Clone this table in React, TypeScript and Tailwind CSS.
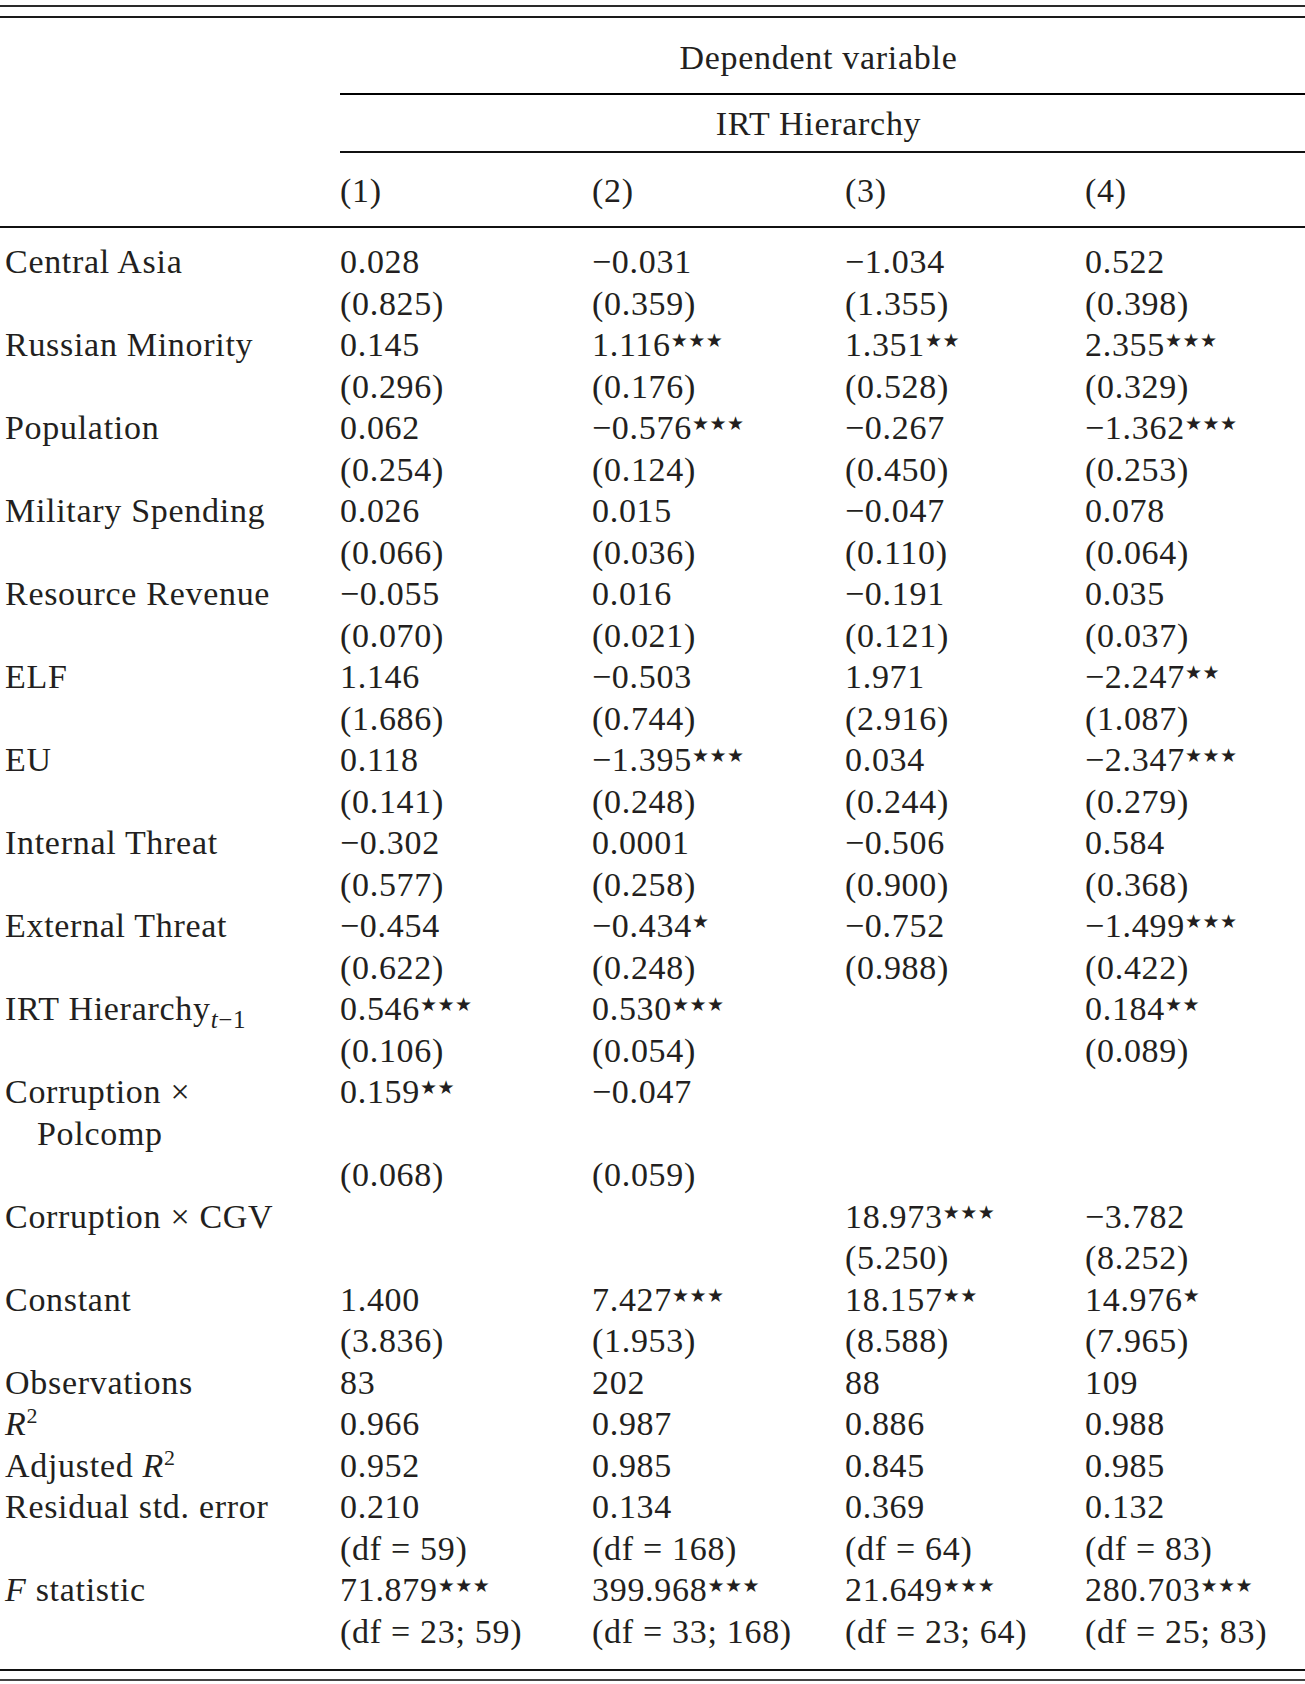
import React from "react";

type Cell = React.ReactNode;

const serif = { fontFamily: '"Liberation Serif", "Times New Roman", serif' };

function Val({ v }: { v: string }) {
  if (!v) return null;
  const m = v.match(/^(.*?)(\*+)$/);
  if (!m) return <>{v}</>;
  return (
    <>
      {m[1]}
      <span
        className="relative bottom-[9px] text-[19px] tracking-[0.5px]"
        style={{ fontFamily: '"DejaVu Sans", sans-serif' }}
      >
        {"★".repeat(m[2].length)}
      </span>
    </>
  );
}

const Rsq = () => (
  <>
    <span className="italic">R</span>
    <span className="relative bottom-[12px] text-[22px]">2</span>
  </>
);

const rows: [Cell, string, string, string, string][] = [
  ["Central Asia", "0.028", "−0.031", "−1.034", "0.522"],
  ["", "(0.825)", "(0.359)", "(1.355)", "(0.398)"],
  ["Russian Minority", "0.145", "1.116***", "1.351**", "2.355***"],
  ["", "(0.296)", "(0.176)", "(0.528)", "(0.329)"],
  ["Population", "0.062", "−0.576***", "−0.267", "−1.362***"],
  ["", "(0.254)", "(0.124)", "(0.450)", "(0.253)"],
  ["Military Spending", "0.026", "0.015", "−0.047", "0.078"],
  ["", "(0.066)", "(0.036)", "(0.110)", "(0.064)"],
  ["Resource Revenue", "−0.055", "0.016", "−0.191", "0.035"],
  ["", "(0.070)", "(0.021)", "(0.121)", "(0.037)"],
  ["ELF", "1.146", "−0.503", "1.971", "−2.247**"],
  ["", "(1.686)", "(0.744)", "(2.916)", "(1.087)"],
  ["EU", "0.118", "−1.395***", "0.034", "−2.347***"],
  ["", "(0.141)", "(0.248)", "(0.244)", "(0.279)"],
  ["Internal Threat", "−0.302", "0.0001", "−0.506", "0.584"],
  ["", "(0.577)", "(0.258)", "(0.900)", "(0.368)"],
  ["External Threat", "−0.454", "−0.434*", "−0.752", "−1.499***"],
  ["", "(0.622)", "(0.248)", "(0.988)", "(0.422)"],
  [
    <>
      IRT Hierarchy
      <span className="relative top-[8px] text-[25px]">
        <span className="italic">t</span>−1
      </span>
    </>,
    "0.546***",
    "0.530***",
    "",
    "0.184**",
  ],
  ["", "(0.106)", "(0.054)", "", "(0.089)"],
  ["Corruption ×", "0.159**", "−0.047", "", ""],
  [<span className="pl-[32px]">Polcomp</span>, "", "", "", ""],
  ["", "(0.068)", "(0.059)", "", ""],
  ["Corruption × CGV", "", "", "18.973***", "−3.782"],
  ["", "", "", "(5.250)", "(8.252)"],
  ["Constant", "1.400", "7.427***", "18.157**", "14.976*"],
  ["", "(3.836)", "(1.953)", "(8.588)", "(7.965)"],
  ["Observations", "83", "202", "88", "109"],
  [<Rsq />, "0.966", "0.987", "0.886", "0.988"],
  [<>Adjusted <Rsq /></>, "0.952", "0.985", "0.845", "0.985"],
  ["Residual std. error", "0.210", "0.134", "0.369", "0.132"],
  ["", "(df = 59)", "(df = 168)", "(df = 64)", "(df = 83)"],
  [<><span className="italic">F</span> statistic</>, "71.879***", "399.968***", "21.649***", "280.703***"],
  ["", "(df = 23; 59)", "(df = 33; 168)", "(df = 23; 64)", "(df = 25; 83)"],
];

const grid = "grid grid-cols-[340px_252px_253px_240px_1fr]";

export default function App() {
  return (
    <div
      className="w-[1305px] h-[1684px] bg-white text-[#231f20] text-[34px] tracking-[0.7px] leading-[41.5px] overflow-hidden"
      style={serif}
    >
      <div className="mt-[5px] h-[2px] bg-[#2a2a2a]" />
      <div className="mt-[9px] h-[2px] bg-[#1a1a1a]" />

      <div className={grid}>
        <div />
        <div className="col-span-4 pt-[19px] pb-[14.5px] text-center pr-[8px]">Dependent variable</div>
      </div>
      <div className={grid}>
        <div />
        <div className="col-span-4 h-[2px] bg-black" />
      </div>
      <div className={grid}>
        <div />
        <div className="col-span-4 pt-[8px] pb-[6.5px] text-center pr-[8px]">IRT Hierarchy</div>
      </div>
      <div className={grid}>
        <div />
        <div className="col-span-4 h-[2px] bg-[#111]" />
      </div>
      <div className={`${grid} pt-[17px] pb-[14.5px]`}>
        <div />
        <div>(1)</div>
        <div>(2)</div>
        <div>(3)</div>
        <div>(4)</div>
      </div>
      <div className="h-[1.5px] bg-[#111]" />

      <div className="pt-[13.5px]">
        {rows.map((r, i) => (
          <div key={i} className={`${grid} h-[41.5px] whitespace-nowrap`}>
            <div className="pl-[5px]">{r[0]}</div>
            <div><Val v={r[1]} /></div>
            <div><Val v={r[2]} /></div>
            <div><Val v={r[3]} /></div>
            <div><Val v={r[4]} /></div>
          </div>
        ))}
      </div>

      <div className="mt-[17px] h-[2px] bg-[#111]" />
      <div className="mt-[8px] h-[1.5px] bg-[#444]" />
    </div>
  );
}
